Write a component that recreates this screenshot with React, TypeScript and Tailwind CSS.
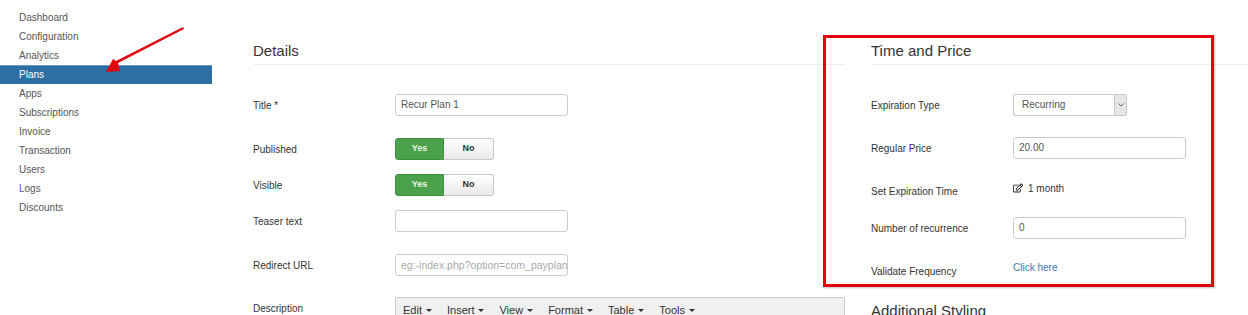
import React from "react";
import { FaRegEdit } from "react-icons/fa";

const font = { fontFamily: '"Liberation Sans", Arial, sans-serif' };

const navItems = [
  "Dashboard",
  "Configuration",
  "Analytics",
  "Plans",
  "Apps",
  "Subscriptions",
  "Invoice",
  "Transaction",
  "Users",
  "Logs",
  "Discounts",
];

function Caret() {
  return (
    <span className="inline-block w-0 h-0 border-l-[3px] border-r-[3px] border-t-[3px] border-l-transparent border-r-transparent border-t-[#333] mt-[1px]" />
  );
}

function Label({ children }: { children: React.ReactNode }) {
  return (
    <div className="w-[142px] shrink-0 text-[10px] leading-[22px] text-[#333] pt-[1px]">{children}</div>
  );
}

function TextInput({ value, placeholder }: { value?: string; placeholder?: string }) {
  return (
    <div className="w-[173px] h-[22px] border border-[#ccc] rounded-[3px] bg-white pl-[5px] text-[10px] leading-[20px] overflow-hidden whitespace-nowrap">
      {value ? (
        <span className="text-[#555]">{value}</span>
      ) : (
        <span className="text-[#aaa] text-[10.5px]">{placeholder}</span>
      )}
    </div>
  );
}

function Toggle() {
  return (
    <div className="flex h-[22px] text-[9px] font-bold">
      <div className="w-[49px] flex items-center justify-center bg-[#4ca24c] border border-[#3f8f3f] rounded-l-[3px] text-[#eaf6ea]">
        Yes
      </div>
      <div className="w-[50px] flex items-center justify-center bg-gradient-to-b from-white to-[#e9e9e9] border border-l-0 border-[#c6c6c6] rounded-r-[3px] text-[#333]">
        No
      </div>
    </div>
  );
}

export default function App() {
  return (
    <div className="relative w-[1248px] h-[315px] overflow-hidden bg-white flex" style={font}>
      {/* Sidebar */}
      <div className="w-[212px] shrink-0 pt-[8px]">
        {navItems.map((item) => (
          <div
            key={item}
            className={
              item === "Plans"
                ? "h-[19px] pl-[19px] text-[10px] text-white bg-[#2f6ea5] border-t border-[#6f9cc6] leading-[17px]"
                : "h-[19px] leading-[19px] pl-[19px] text-[10px] text-[#555]"
            }
          >
            {item}
          </div>
        ))}
      </div>

      {/* Main */}
      <div className="flex pl-[41px] pt-[39px] flex-1">
        {/* Details */}
        <div className="w-[592px] shrink-0">
          <h2 className="text-[15px] leading-[24px] text-[#333] pb-px border-b border-[#eee]">Details</h2>
          <div className="flex flex-col pt-[29px]">
            <div className="flex h-[22px]">
              <Label>Title *</Label>
              <TextInput value="Recur Plan 1" />
            </div>
            <div className="flex h-[22px] mt-[22px]">
              <Label>Published</Label>
              <Toggle />
            </div>
            <div className="flex h-[22px] mt-[14px]">
              <Label>Visible</Label>
              <Toggle />
            </div>
            <div className="flex h-[22px] mt-[14px]">
              <Label>Teaser text</Label>
              <TextInput />
            </div>
            <div className="flex h-[22px] mt-[22px]">
              <Label>Redirect URL</Label>
              <TextInput placeholder="eg:-index.php?option=com_payplans" />
            </div>
            <div className="flex mt-[21px]">
              <div className="w-[142px] shrink-0 text-[10px] leading-[22px] text-[#333] pt-[1px]">Description</div>
              <div className="w-[451px] h-[30px] border border-[#ccc] bg-[#f0f0f0] flex items-start pl-[7px] pt-[5px] gap-[15px] text-[11px] leading-[14px] text-[#333]">
                {["Edit", "Insert", "View", "Format", "Table", "Tools"].map((m) => (
                  <div key={m} className="flex items-center gap-[4px]">
                    <span>{m}</span>
                    <Caret />
                  </div>
                ))}
              </div>
            </div>
          </div>
        </div>

        {/* Time and Price */}
        <div className="ml-[26px] flex-1">
          <h2 className="text-[15px] leading-[24px] text-[#333] pb-px border-b border-[#eee]">Time and Price</h2>
          <div className="flex flex-col pt-[29px]">
            <div className="flex h-[22px]">
              <Label>Expiration Type</Label>
              <div className="w-[114px] h-[22px] border border-[#c8c8c8] rounded-[2px] bg-white flex text-[10px] text-[#555]">
                <div className="flex-1 pl-[8px] leading-[20px]">Recurring</div>
                <div className="w-[12px] bg-[#e6e6e6] border-l border-[#c8c8c8] flex items-center justify-center">
                  <svg width="6" height="4" viewBox="0 0 6 4">
                    <path d="M0.5 0.5 L3 3 L5.5 0.5" fill="none" stroke="#666" strokeWidth="1" />
                  </svg>
                </div>
              </div>
            </div>
            <div className="flex h-[22px] mt-[21px]">
              <Label>Regular Price</Label>
              <TextInput value="20.00" />
            </div>
            <div className="flex h-[22px] mt-[21px]">
              <Label>Set Expiration Time</Label>
              <div className="flex items-center h-[16px] text-[10px] text-[#333] gap-[5px]">
                <FaRegEdit className="w-[10px] h-[10px] text-[#222]" />
                <span>1 month</span>
              </div>
            </div>
            <div className="flex h-[22px] mt-[15px]">
              <Label>Number of recurrence</Label>
              <TextInput value="0" />
            </div>
            <div className="flex h-[22px] mt-[21px]">
              <Label>Validate Frequency</Label>
              <div className="text-[10px] leading-[16px] text-[#3479b7]">Click here</div>
            </div>
            <h2 className="mt-[17px] text-[15px] leading-[24px] text-[#333]">Additional Styling</h2>
          </div>
        </div>
      </div>

      {/* Annotation: red box */}
      <div className="absolute left-[823px] top-[35px] w-[391px] h-[252px] border-[3px] border-[#e3000d] shadow-[1px_1px_2px_rgba(0,0,0,0.25)] pointer-events-none" />

      {/* Annotation: red arrow */}
      <svg className="absolute left-0 top-0 pointer-events-none" width="212" height="90" viewBox="0 0 212 90">
        <polygon points="183,27 184,29 118,63 120,71 106,72 113,59 116,61" fill="#e1000c" />
      </svg>
    </div>
  );
}
